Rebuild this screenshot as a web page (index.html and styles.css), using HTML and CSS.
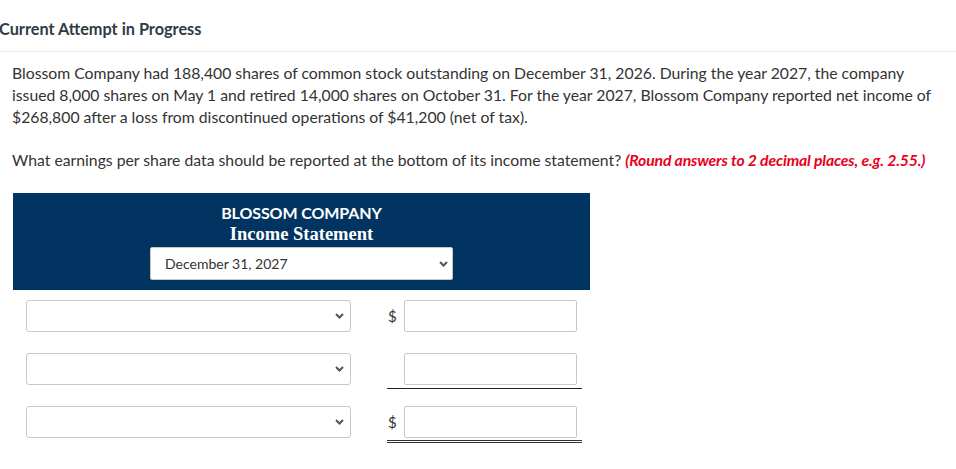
FILE: index.html
```html
<!DOCTYPE html>
<html lang="en">
<head>
<meta charset="utf-8">
<title>Current Attempt in Progress</title>
<link rel="stylesheet" href="styles.css">
</head>
<body>
<header class="attempt-header">Current Attempt in Progress</header>
<main class="question">
  <p class="question-text">Blossom Company had 188,400 shares of common stock outstanding on December 31, 2026. During the year 2027, the company issued 8,000 shares on May 1 and retired 14,000 shares on October 31. For the year 2027, Blossom Company reported net income of $268,800 after a loss from discontinued operations of $41,200 (net of tax).</p>
  <p class="question-text ask">What earnings per share data should be reported at the bottom of its income statement? <em class="hint">(Round answers to 2 decimal places, e.g. 2.55.)</em></p>

  <section class="statement">
    <div class="statement-head">
      <div class="company">BLOSSOM COMPANY</div>
      <div class="title">Income Statement</div>
      <div class="select date-select">
        <span>December 31, 2027</span>
        <svg class="chev" width="9" height="6" viewBox="0 0 9 6"><path d="M1 1 L4.5 4.5 L8 1" fill="none" stroke="#555" stroke-width="2"/></svg>
      </div>
    </div>

    <div class="row">
      <div class="select line-select">
        <span></span>
        <svg class="chev" width="9" height="6" viewBox="0 0 9 6"><path d="M1 1 L4.5 4.5 L8 1" fill="none" stroke="#555" stroke-width="2"/></svg>
      </div>
      <div class="amount">
        <span class="dollar">$</span>
        <div class="input"></div>
      </div>
    </div>

    <div class="row">
      <div class="select line-select">
        <span></span>
        <svg class="chev" width="9" height="6" viewBox="0 0 9 6"><path d="M1 1 L4.5 4.5 L8 1" fill="none" stroke="#555" stroke-width="2"/></svg>
      </div>
      <div class="amount single">
        <span class="dollar"></span>
        <div class="input"></div>
      </div>
    </div>

    <div class="row">
      <div class="select line-select">
        <span></span>
        <svg class="chev" width="9" height="6" viewBox="0 0 9 6"><path d="M1 1 L4.5 4.5 L8 1" fill="none" stroke="#555" stroke-width="2"/></svg>
      </div>
      <div class="amount double">
        <span class="dollar">$</span>
        <div class="input"></div>
      </div>
    </div>
  </section>
</main>
</body>
</html>
```

FILE: styles.css
```css
* { box-sizing: border-box; }

body {
  margin: 0;
  background: #fff;
  font-family: Lato, "Liberation Sans", sans-serif;
  color: #333;
}

.attempt-header {
  height: 52px;
  padding-top: 18px;
  font-size: 16.3px;
  line-height: 21px;
  font-weight: 700;
  color: #2d3b45;
  border-bottom: 1px solid #e8e8e8;
  margin-left: -1px;
}

.question {
  padding: 10px 0 0 12px;
}

.question-text {
  margin: 0;
  font-size: 15.75px;
  line-height: 22px;
  color: #333;
  max-width: 935px;
}

.question-text.ask {
  margin-top: 21px;
}

.hint {
  color: #e8001c;
  font-weight: 700;
  font-style: italic;
  letter-spacing: -0.15px;
}

.statement {
  margin: 22px 0 0 1px;
  width: 577px;
}

.statement-head {
  background: #023462;
  height: 97px;
  padding-top: 9px;
  display: flex;
  flex-direction: column;
  align-items: center;
  color: #fff;
}

.company {
  font-size: 16px;
  line-height: 21px;
  font-weight: 700;
  letter-spacing: -0.1px;
}

.title {
  font-family: "Liberation Serif", serif;
  font-size: 18.5px;
  line-height: 22px;
  font-weight: 700;
}

.select {
  display: flex;
  align-items: center;
  justify-content: space-between;
  background: #fff;
  border: 1px solid #c8c8c8;
  border-radius: 2px;
  padding: 0 4px 0 14px;
  font-size: 14px;
  color: #333;
}

.date-select {
  margin-top: 2px;
  width: 303px;
  height: 33px;
}

.chev { display: block; }

.row {
  display: flex;
  align-items: flex-start;
  padding: 10px 0 7px 13px;
}

.line-select {
  width: 325px;
  height: 32px;
  border-radius: 3px;
  padding-right: 6px;
}

.amount {
  margin-left: 36px;
  width: 195px;
  display: flex;
  align-items: center;
  padding-bottom: 3px;
  border-bottom: 1px solid transparent;
}

.amount.single { border-bottom: 1px solid #222; }

.amount.double {
  border-bottom: 3px double #333;
  padding-bottom: 2px;
}

.dollar {
  width: 17px;
  padding-left: 1px;
  font-size: 15px;
  color: #333;
}

.input {
  width: 173px;
  height: 32px;
  border: 1px solid #c8c8c8;
  border-radius: 2px;
  background: #fff;
}
```
